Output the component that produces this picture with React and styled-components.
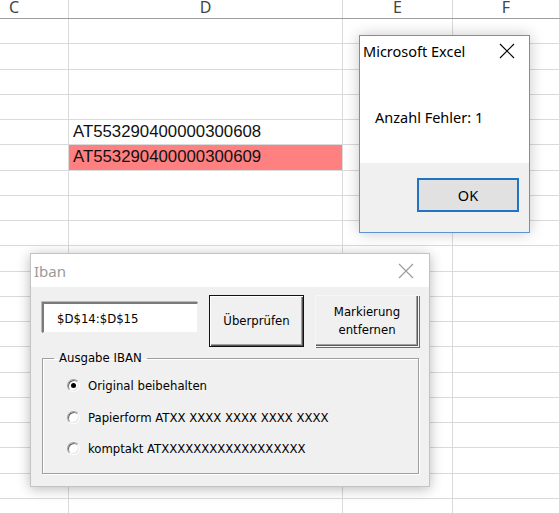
import React from "react";
import styled, { createGlobalStyle } from "styled-components";

const Global = createGlobalStyle`
  html, body { margin: 0; padding: 0; background: #fff; }
  body { overflow: hidden; }
  * { box-sizing: border-box; }
`;

const Sheet = styled.div`
  position: relative;
  width: 560px;
  height: 513px;
  overflow: hidden;
  background: #fff;
`;

const COLS = "69px 274px 110px 1fr";

const HeaderRow = styled.div`
  display: grid;
  grid-template-columns: ${COLS};
  height: 19px;
  border-bottom: 1px solid #9e9e9e;
  overflow: hidden;
`;

const HeaderCell = styled.div`
  display: flex;
  justify-content: ${(p) => (p.$left ? "flex-start" : "center")};
  padding-left: ${(p) => (p.$left ? "9px" : "0")};
  border-right: 1px solid #d8d8d8;
  font-family: "Noto Sans", "Liberation Sans", sans-serif;
  font-size: 16px;
  color: #444;
  line-height: 18px;
  span { margin-top: -2px; }
`;

const Row = styled.div`
  display: grid;
  grid-template-columns: ${COLS};
  height: 25.25px;
  border-bottom: 1px solid #dadada;
`;

const Cell = styled.div`
  border-right: 1px solid #dadada;
  background: ${(p) => (p.$hl ? "#ff8080" : "transparent")};
  display: flex;
  align-items: center;
  padding-left: 4px;
  font-family: "Liberation Sans", Arial, sans-serif;
  font-size: 16.8px;
  color: #111;
  white-space: nowrap;
`;

/* ---------- Message box ---------- */
const MsgBox = styled.div`
  position: absolute;
  left: 359px;
  top: 35px;
  width: 171px;
  height: 198px;
  border: 1px solid #5f95cf;
  background: #fff;
  display: flex;
  flex-direction: column;
  box-shadow: 0 0 14px rgba(0, 0, 0, 0.22);
  font-family: "Noto Sans", "Liberation Sans", sans-serif;
  color: #000;
`;

const MsgTitleBar = styled.div`
  display: flex;
  align-items: center;
  justify-content: space-between;
  height: 30px;
  padding: 0 14px 0 3px;
  font-size: 14.5px;
`;

const MsgBody = styled.div`
  flex: 1;
  padding: 41px 0 0 15px;
  font-size: 14.5px;
`;

const MsgFooter = styled.div`
  height: 69px;
  background: #f0f0f0;
  display: flex;
  justify-content: flex-end;
  align-items: flex-start;
  padding: 15px 10px 0 0;
`;

const OkButton = styled.button`
  width: 102px;
  height: 34px;
  border: 2px solid #1f74c4;
  background: #e1e1e1;
  font-family: "Noto Sans", "Liberation Sans", sans-serif;
  font-size: 14.5px;
  color: #000;
  padding: 0;
`;

/* ---------- Iban user form ---------- */
const Form = styled.div`
  position: absolute;
  left: 30px;
  top: 253px;
  width: 400px;
  height: 234px;
  border: 1px solid #c3c3c3;
  background: #f0f0f0;
  display: flex;
  flex-direction: column;
  box-shadow: 0 2px 12px rgba(0, 0, 0, 0.28);
`;

const FormTitleBar = styled.div`
  height: 33px;
  background: #fff;
  display: flex;
  align-items: center;
  justify-content: space-between;
  padding: 0 15px 0 3px;
  font-family: "Noto Sans", "Liberation Sans", sans-serif;
  font-size: 15px;
  color: #9a9a9a;
`;

const FormBody = styled.div`
  flex: 1;
  padding: 8px 9px 0 11px;
  display: flex;
  flex-direction: column;
  font-family: "DejaVu Sans Condensed", "DejaVu Sans", sans-serif;
  font-size: 13px;
  color: #000;
`;

const TopRow = styled.div`
  display: flex;
  align-items: flex-start;
  gap: 11px;
`;

const TextBox = styled.div`
  margin-top: 7px;
  width: 156px;
  height: 31px;
  background: #fff;
  border-style: solid;
  border-width: 2px 1px 1px 2px;
  border-color: #7a7a7a #f0f0f0 #f0f0f0 #7a7a7a;
  box-shadow: -1px -1px 0 #b9b9b9;
  display: flex;
  align-items: center;
  padding-left: 13px;
`;

const ClassicButton = styled.button`
  width: ${(p) => p.$w}px;
  height: 52px;
  padding: 0;
  background: #f0f0f0;
  font-family: "DejaVu Sans Condensed", "DejaVu Sans", sans-serif;
  font-size: 13px;
  line-height: 18px;
  color: #000;
  border: 1px solid ${(p) => (p.$default ? "#111" : "#f6f6f6")};
  box-shadow: ${(p) =>
    p.$default
      ? "inset 1px 1px #fff, inset -1px -1px #555, inset -2px -2px #a0a0a0"
      : "inset -1px -1px #5a5a5a, inset -2px -2px #a0a0a0, 1px 1px #6a6a6a"};
`;

const Frame = styled.fieldset`
  margin: 3px 0 0 0;
  width: 377px;
  height: 124px;
  padding: 0;
  border: 1px solid #a0a0a0;
  box-shadow: 1px 1px 0 #fff, inset 1px 1px 0 #fff;
`;

const Legend = styled.legend`
  margin-left: 11px;
  padding: 0 5px;
  line-height: 16px;
`;

const RadioList = styled.div`
  display: flex;
  flex-direction: column;
  padding: 4px 0 0 24px;
`;

const RadioRow = styled.label`
  display: flex;
  align-items: center;
  gap: 8px;
  height: 31.5px;
`;

const RadioMark = styled.span`
  position: relative;
  width: 13px;
  height: 13px;
  border-radius: 50%;
  background: #fff;
  border: 1px solid;
  border-color: #a0a0a0 #fff #fff #a0a0a0;
  box-shadow: inset 1px 1px 0 #6a6a6a, inset -1px -1px 0 #e3e3e3;
  flex: none;
  &::after {
    content: "";
    display: ${(p) => (p.$checked ? "block" : "none")};
    position: absolute;
    left: 3px;
    top: 3px;
    width: 5px;
    height: 5px;
    border-radius: 50%;
    background: #000;
  }
`;

const CloseIcon = ({ color, size, weight }) => (
  <svg width={size} height={size} viewBox="0 0 16 16">
    <path d="M1 1 L15 15 M15 1 L1 15" stroke={color} strokeWidth={weight} fill="none" />
  </svg>
);

const rows = Array.from({ length: 20 }, (_, i) => i);

export default function App() {
  return (
    <Sheet>
      <Global />
      <HeaderRow>
        <HeaderCell $left><span>C</span></HeaderCell>
        <HeaderCell><span>D</span></HeaderCell>
        <HeaderCell><span>E</span></HeaderCell>
        <HeaderCell><span>F</span></HeaderCell>
      </HeaderRow>
      {rows.map((i) => (
        <Row key={i}>
          <Cell />
          <Cell $hl={i === 5}>
            {i === 4 ? "AT553290400000300608" : i === 5 ? "AT553290400000300609" : ""}
          </Cell>
          <Cell />
          <Cell />
        </Row>
      ))}

      <MsgBox>
        <MsgTitleBar>
          <span>Microsoft Excel</span>
          <CloseIcon color="#000" size={16} weight={1.1} />
        </MsgTitleBar>
        <MsgBody>Anzahl Fehler: 1</MsgBody>
        <MsgFooter>
          <OkButton>OK</OkButton>
        </MsgFooter>
      </MsgBox>

      <Form>
        <FormTitleBar>
          <span>Iban</span>
          <CloseIcon color="#9a9a9a" size={16} weight={1.1} />
        </FormTitleBar>
        <FormBody>
          <TopRow>
            <TextBox>$D$14:$D$15</TextBox>
            <ClassicButton $w={95} $default>Überprüfen</ClassicButton>
            <ClassicButton $w={104}>Markierung<br />entfernen</ClassicButton>
          </TopRow>
          <Frame>
            <Legend>Ausgabe IBAN</Legend>
            <RadioList>
              <RadioRow><RadioMark $checked />Original beibehalten</RadioRow>
              <RadioRow><RadioMark />Papierform ATXX XXXX XXXX XXXX XXXX</RadioRow>
              <RadioRow><RadioMark />komptakt ATXXXXXXXXXXXXXXXXXX</RadioRow>
            </RadioList>
          </Frame>
        </FormBody>
      </Form>
    </Sheet>
  );
}
